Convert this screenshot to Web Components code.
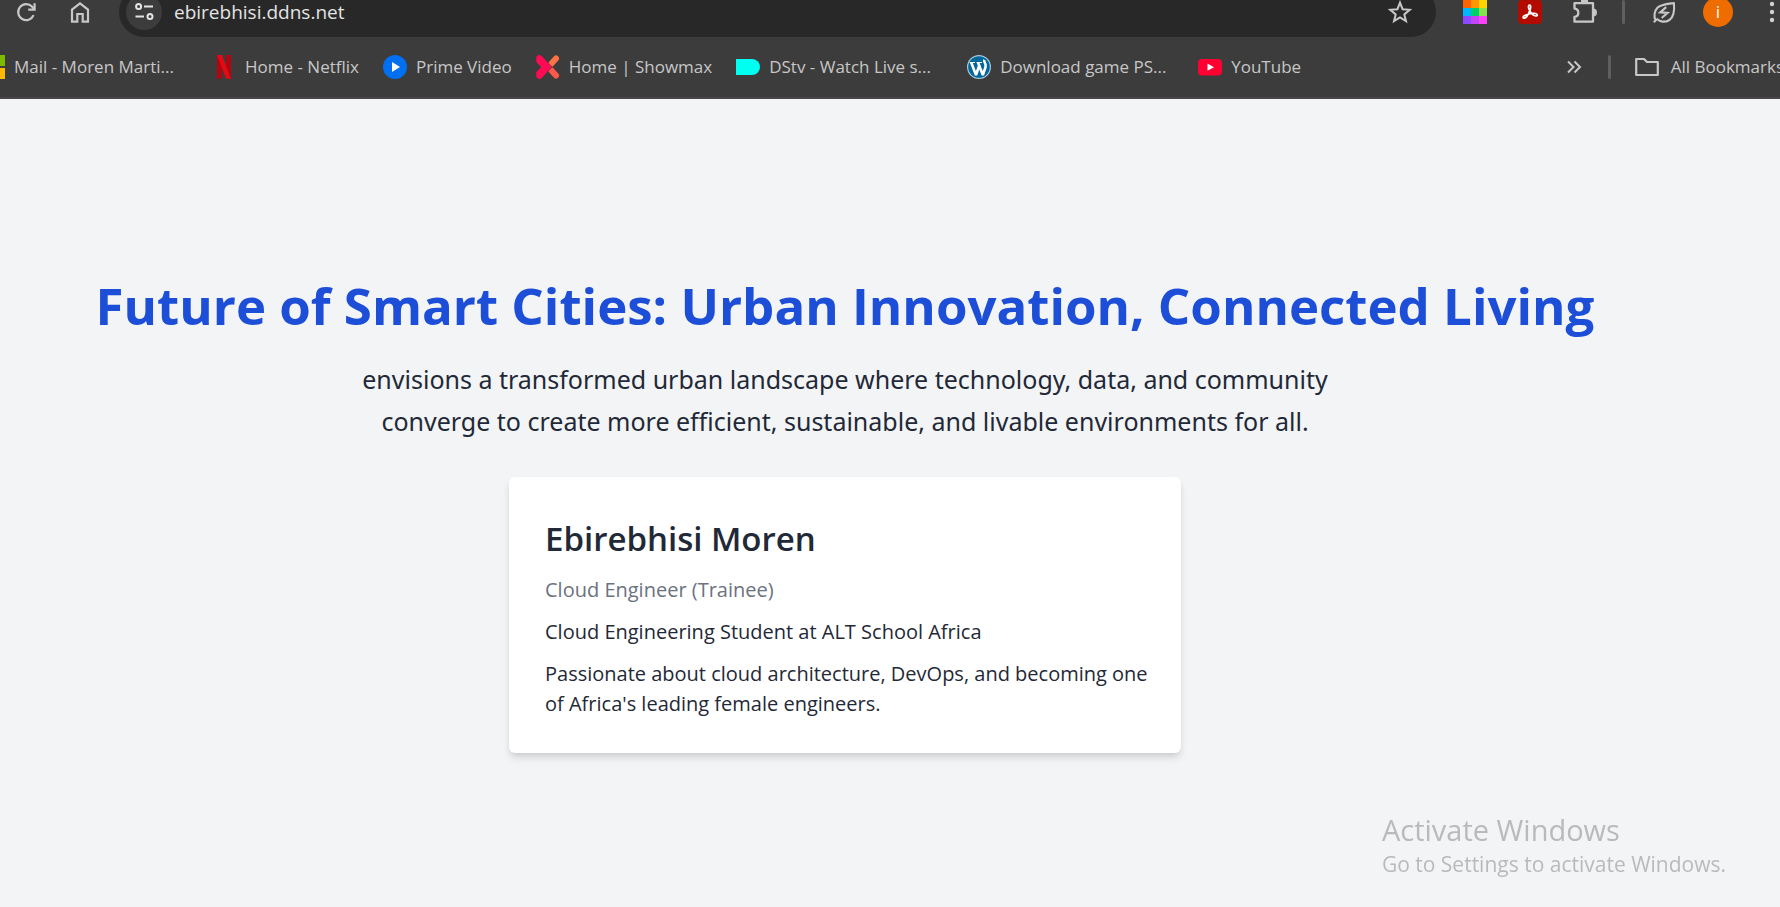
<!DOCTYPE html>
<html lang="en">
<head>
<meta charset="utf-8">
<title>Future of Smart Cities</title>
<style>
  body { margin: 0; min-height: 100vh; background: #f3f4f6; color: #1f2937; font-family: "Open Sans", "Noto Sans", sans-serif; overflow-x: hidden; }
</style>
</head>
<body>
<browser-toolbar></browser-toolbar>
<bookmarks-bar>
  <bookmark-link icon="microsoft" wide>Mail - Moren Marti...</bookmark-link>
  <bookmark-link icon="netflix">Home - Netflix</bookmark-link>
  <bookmark-link icon="prime">Prime Video</bookmark-link>
  <bookmark-link icon="showmax">Home | Showmax</bookmark-link>
  <bookmark-link icon="dstv" wide>DStv - Watch Live s...</bookmark-link>
  <bookmark-link icon="wordpress" wide>Download game PS...</bookmark-link>
  <bookmark-link icon="youtube">YouTube</bookmark-link>
</bookmarks-bar>
<landing-page>
  <span slot="title">Future of Smart Cities: Urban Innovation, Connected Living</span>
  <span slot="lead">envisions a transformed urban landscape where technology, data, and community converge to create more efficient, sustainable, and livable environments for all.</span>
  <profile-card>
    <span slot="name">Ebirebhisi Moren</span>
    <span slot="role">Cloud Engineer (Trainee)</span>
    <p>Cloud Engineering Student at ALT School Africa</p>
    <p>Passionate about cloud architecture, DevOps, and becoming one of Africa's leading female engineers.</p>
  </profile-card>
</landing-page>
<activation-notice></activation-notice>

<script>
const line = (body, w = 2) => `<g fill="none" stroke="#c7c7c7" stroke-width="${w}">${body}</g>`;
const ICONS = {
  reload: line('<path d="M19.6 15.2A8 8 0 1 1 18 6.6L20 9"/><path d="M20.6 3.2V9.6H14.2"/>', 2.2),
  home: line('<path d="M4 21.7V9.6L12 3.4L20 9.6V21.7H14.7V14H9.3V21.7Z"/>', 2.2),
  tune: '<g fill="none" stroke="#e3e3e3" stroke-width="2"><circle cx="6.6" cy="6.6" r="2.5"/><path d="M12 6.6H21M3.5 16.4H12"/><circle cx="18" cy="16.4" r="2.5"/></g>',
  star: line('<path d="M12 2.6L14.6 9.2L21.8 9.8L16.3 14.4L18 21.2L12 17.5L6 21.2L7.7 14.4L2.2 9.8L9.4 9.2Z"/>'),
  grid: '<path fill="#ff6200" d="M0 0h8v8H0z"/><path fill="#ff9800" d="M8 0h8v8H8z"/><path fill="#ffd500" d="M16 0h8v8h-8z"/><path fill="#00b7ff" d="M0 8h8v8H0z"/><path fill="#00cf6b" d="M8 8h8v8H8z"/><path fill="#86e34c" d="M16 8h8v8h-8z"/><path fill="#8c49ff" d="M0 16h8v8H0z"/><path fill="#c246f5" d="M8 16h8v8H8z"/><path fill="#fb42f7" d="M16 16h8v8h-8z"/>',
  pdf: '<rect width="24" height="24" rx="4" fill="#b30b00"/><path fill="none" stroke="#fff" stroke-width="1.7" stroke-linejoin="round" d="M11.8 10.5C9.7 7.6 10.2 5 11.6 5C13.1 5 12.8 8.2 11.8 10.6C10.7 13.5 8.4 18 6.3 18.2C4.8 18.3 4.7 16.8 6.3 15.8C8.7 14.3 13.7 13.1 16.7 13.4C20 13.7 19.8 16 17.9 16C15.6 16 13.1 13.3 11.8 10.5Z"/>',
  puzzle: '<path fill="none" stroke="#c7c7c7" stroke-width="2.3" stroke-linejoin="round" d="M1.500 3.200H20V21.700H1.500V16.800C6.600 16.200 6.600 9.200 1.500 8.600Z"/><path fill="#c7c7c7" d="M8 3V1a3.500 3.500 0 0 1 7 0v2zM20 8.500a4 4 0 0 1 0 8z"/>',
  leaf: line('<path stroke-linejoin="round" d="M3.6 20.2C1.5 16.6 2.4 11 5.4 7.8C8.8 4.3 14.5 4 21.9 3C22.7 11 21.5 17.3 17.4 20C13.2 22.7 8 22 4.7 18.8M1.8 22.3L5 19"/><path d="M14.2 7.1L8.2 12.4L15.6 12.9L9.7 18"/>', 2.1),
  dots: '<g fill="#d0d0d0"><circle cx="12" cy="4" r="2.2"/><circle cx="12" cy="12" r="2.2"/><circle cx="12" cy="20" r="2.2"/></g>',
  microsoft: '<path fill="#f25022" d="M0 0h11v11H0z"/><path fill="#7fba00" d="M13 0h11v11H13z"/><path fill="#00a4ef" d="M0 13h11v11H0z"/><path fill="#ffb900" d="M13 13h11v11H13z"/>',
  netflix: '<path fill="#b1060f" d="M5 0h5v23.5L5 24zM14 0h5v24l-5-.5z"/><path fill="#e50914" d="M5 0h5l9 24-5-.6z"/>',
  prime: '<circle cx="12" cy="12" r="12" fill="#0070f0"/><path fill="#fff" d="M9 7L17 12L9 17Z"/>',
  showmax: '<g fill="none" stroke-linecap="round" stroke-width="6"><path stroke="#ff7245" d="M15.500 8.500L20 3.500"/><path stroke="#ff5849" d="M15.500 15.500L20 20.500"/></g><path fill="#ff0a54" stroke="#3c3c3c" stroke-width=".6" d="M0 2Q2.600-2 6 1L16 12L6 23Q2.600 26 0 22V17L5 12L0 7Z"/>',
  dstv: '<path fill="#00fff0" d="M0 4H16a8 8 0 0 1 0 16H0z"/>',
  wordpress: '<circle cx="12" cy="12" r="12" fill="#a9cbdc"/><circle cx="12" cy="12" r="10.8" fill="#00689b"/><path fill="none" stroke="#fff" stroke-width="2.6" stroke-linejoin="bevel" d="M4.2 7.5L9 20L12.6 9.5M11 7.5L15.8 20L18.4 12.5C19.9 8.7 16.3 7.6 17.3 4.8"/><path stroke="#fff" stroke-width="1.2" d="M2.6 7.5H8M9.5 7.500H15"/>',
  youtube: '<rect y="4" width="24" height="16.5" rx="4" fill="#ff0033"/><path fill="#fff" d="M9.5 8.6L16 12.2L9.5 15.8Z"/>',
  more: line('<path d="M6 6.5L11.5 12L6 17.5M12.5 6.5L18 12L12.5 17.5"/>'),
  folder: line('<path stroke-linejoin="round" d="M1.2 4H9L12 7H22.8V20H1.2Z"/>', 2.2)
};
const define = (name, html, setup) => customElements.define(name, class extends HTMLElement {
  constructor() {
    super();
    const t = document.createElement('template');
    t.innerHTML = html;
    this.attachShadow({ mode: 'open' }).append(t.content.cloneNode(true));
  }
  connectedCallback() { if (setup) setup(this, this.shadowRoot); }
});

define('ui-icon', `<style>
  :host { display: block; flex: none; width: 24px; height: 24px; }
  svg { display: block; width: 100%; height: 100%; overflow: visible; }
</style><svg viewBox="0 0 24 24" aria-hidden="true"></svg>`,
(el, root) => { root.querySelector('svg').innerHTML = ICONS[el.getAttribute('name')] || ''; });

define('tool-button', `<style>
  :host { display: block; flex: none; }
  button { display: block; margin: 0; padding: 0; border: 0; background: none; color: inherit; font: inherit; }
</style><button type="button"><slot></slot></button>`,
(el, root) => root.querySelector('button').setAttribute('aria-label', el.getAttribute('label')));

define('browser-toolbar', `<style>
  :host { display: block; overflow: hidden; background: #3c3c3c; color: #e3e3e3; }
  .row { display: flex; align-items: center; height: 50px; margin: -13px -4px 0 0; padding-left: 14px; }
  .nav { display: flex; gap: 30px; margin-right: 27px; }
  .address { flex: 1; min-width: 0; display: flex; align-items: center; height: 50px; box-sizing: border-box; padding: 0 24px 0 7px; border-radius: 25px; background: #282828; }
  .site { display: grid; place-items: center; width: 36px; height: 36px; border-radius: 50%; background: #3c3c3c; }
  input { flex: 1; min-width: 0; height: 30px; margin: 0 0 0 12px; padding: 0; border: 0; outline: 0; background: none; color: #e3e3e3; font: 19px/30px "Open Sans", "Noto Sans", sans-serif; }
  .tools { display: flex; align-items: center; gap: 31px; margin-left: 27px; }
  .account { display: flex; align-items: center; gap: 27px; margin-left: 25px; }
  .rule { width: 3px; height: 24px; border-radius: 2px; background: #5f5f5f; }
  .avatar { display: grid; place-items: center; width: 30px; height: 30px; border-radius: 50%; background: #ef6c00; color: #fff; font-size: 17px; line-height: 30px; }
</style>
<div class="row">
  <div class="nav">
    <tool-button label="Reload"><ui-icon name="reload"></ui-icon></tool-button>
    <tool-button label="Home"><ui-icon name="home"></ui-icon></tool-button>
  </div>
  <div class="address">
    <tool-button label="Site information"><span class="site"><ui-icon name="tune"></ui-icon></span></tool-button>
    <input type="text" aria-label="Address" value="ebirebhisi.ddns.net">
    <tool-button label="Bookmark this tab"><ui-icon name="star"></ui-icon></tool-button>
  </div>
  <div class="tools">
    <tool-button label="Colour extension"><ui-icon name="grid"></ui-icon></tool-button>
    <tool-button label="PDF extension"><ui-icon name="pdf"></ui-icon></tool-button>
    <tool-button label="Extensions"><ui-icon name="puzzle"></ui-icon></tool-button>
  </div>
  <div class="account">
    <span class="rule"></span>
    <tool-button label="Energy saver"><ui-icon name="leaf"></ui-icon></tool-button>
    <tool-button label="Profile"><span class="avatar">i</span></tool-button>
    <tool-button label="Menu"><ui-icon name="dots"></ui-icon></tool-button>
  </div>
</div>`);

define('bookmark-link', `<style>
  :host { display: block; flex: none; }
  a { display: flex; align-items: center; gap: 9px; color: #c7c7c7; text-decoration: none; white-space: nowrap; }
  :host([wide]) span { width: 174px; }
  :host([icon="folder"]) a { gap: 12px; }
</style><a href="#"><ui-icon></ui-icon><span><slot></slot></span></a>`,
(el, root) => {
  const icon = document.createElement('ui-icon');
  icon.setAttribute('name', el.getAttribute('icon'));
  root.querySelector('ui-icon').replaceWith(icon);
});

define('bookmarks-bar', `<style>
  :host { display: block; overflow: hidden; background: #3c3c3c; border-bottom: 2px solid #484646; font-size: 17px; line-height: 24px; }
  nav { display: flex; align-items: center; height: 60px; margin: 0 -4px 0 -19px; }
  .links { display: flex; gap: 24px; }
  .end { display: flex; align-items: center; margin-left: auto; gap: 24px; }
  .more { display: flex; align-items: center; gap: 22px; }
  .rule { width: 3px; height: 24px; border-radius: 2px; background: #5f5f5f; }
</style>
<nav aria-label="Bookmarks">
  <div class="links"><slot></slot></div>
  <div class="end">
    <div class="more"><tool-button label="More bookmarks"><ui-icon name="more"></ui-icon></tool-button><span class="rule"></span></div>
    <bookmark-link icon="folder">All Bookmarks</bookmark-link>
  </div>
</nav>`);

define('landing-page', `<style>
  :host { display: block; padding: 176px 90px 90px 0; }
  main { display: flex; flex-direction: column; align-items: center; }
  h1 { margin: 0 0 23px; color: #1d4ed8; font-size: 51px; line-height: 60px; font-weight: 700; text-align: center; }
  .lead { max-width: 1008px; margin: 0 0 35px; font-family: "Noto Sans", sans-serif; font-size: 25px; line-height: 42px; text-align: center; }
</style>
<main>
  <h1><slot name="title"></slot></h1>
  <p class="lead"><slot name="lead"></slot></p>
  <slot></slot>
</main>`);

define('profile-card', `<style>
  :host { display: block; box-sizing: border-box; width: 672px; max-width: 100%; padding: 36px 30px 34px 36px; border-radius: 6px; background: #fff; box-shadow: 0 6px 9px -1px rgb(0 0 0 / .1), 0 3px 6px -2px rgb(0 0 0 / .1); font-size: 20px; line-height: 30px; }
  h2 { margin: 0 0 10px; font-size: 33px; line-height: 52px; font-weight: 600; }
  .role { margin: 0; color: #6b7280; }
  ::slotted(p) { margin: 12px 0 0; }
</style>
<h2><slot name="name"></slot></h2>
<p class="role"><slot name="role"></slot></p>
<slot></slot>`);

define('activation-notice', `<style>
  :host { display: block; position: fixed; right: 54px; bottom: 28px; color: #b9babb; pointer-events: none; }
  p { margin: 0; }
  .heading { font-size: 29px; line-height: 38px; }
  .detail { font-size: 21px; line-height: 30px; }
</style>
<p class="heading">Activate Windows</p>
<p class="detail">Go to Settings to activate Windows.</p>`);
</script>
</body>
</html>
